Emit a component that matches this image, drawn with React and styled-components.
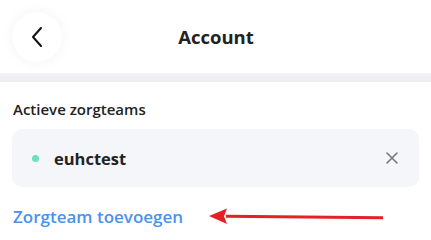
import styled, { createGlobalStyle } from "styled-components";

const GlobalStyle = createGlobalStyle`
  body {
    margin: 0;
    padding: 0;
    background: #ffffff;
    font-family: "Open Sans", Lato, sans-serif;
  }
`;

const Page = styled.div`
  width: 431px;
  height: 240px;
  overflow: hidden;
  background: #fff;
`;

const TopBar = styled.div`
  position: relative;
  height: 73px;
  display: flex;
  align-items: center;
  justify-content: center;
`;

const BackButton = styled.button`
  position: absolute;
  left: 12px;
  top: 12px;
  width: 50px;
  height: 50px;
  border-radius: 50%;
  border: none;
  background: #fff;
  box-shadow: 0 0 14px rgba(0, 0, 0, 0.05);
  display: flex;
  align-items: center;
  justify-content: center;
  padding: 0;
`;

const Title = styled.h1`
  margin: 0 0 0 1px;
  font-size: 18.5px;
  font-weight: 700;
  color: #222;
`;

const Divider = styled.div`
  height: 9px;
  background: linear-gradient(#f4f4f7, #ececf1);
`;

const Section = styled.div`
  padding: 17px 12px 0;
`;

const Label = styled.div`
  font-size: 15px;
  font-weight: 600;
  color: #222;
  padding-left: 1px;
  margin-bottom: 10px;
`;

const TeamCard = styled.div`
  height: 58px;
  border-radius: 10px;
  background: #f5f6fa;
  display: flex;
  align-items: center;
  padding: 0 21px 0 20px;
`;

const Dot = styled.span`
  width: 7px;
  height: 7px;
  border-radius: 50%;
  background: ${({ color }) => color};
  margin-right: 15px;
`;

const TeamName = styled.span`
  flex: 1;
  font-size: 16.5px;
  font-weight: 700;
  color: #222;
`;

const LinkRow = styled.div`
  position: relative;
  margin-top: 14px;
  height: 30px;
  display: flex;
  align-items: center;
`;

const AddLink = styled.a`
  font-size: 17px;
  font-weight: 600;
  color: #4a92ee;
  text-decoration: none;
  padding-left: 1px;
`;

const Arrow = styled.svg`
  position: absolute;
  left: 184px;
  top: 6px;
`;

export default function App() {
  return (
    <>
      <GlobalStyle />
      <Page>
        <TopBar>
          <BackButton>
            <svg width="16" height="24" viewBox="0 0 16 24">
              <path d="M12 3 L4 12 L12 21" fill="none" stroke="#111" strokeWidth="2" strokeLinecap="round" strokeLinejoin="round" />
            </svg>
          </BackButton>
          <Title>Account</Title>
        </TopBar>
        <Divider />
        <Section>
          <Label>Actieve zorgteams</Label>
          <TeamCard>
            <Dot color="#6fe0b9" />
            <TeamName>euhctest</TeamName>
            <svg width="12" height="12" viewBox="0 0 12 12">
              <path d="M1 1 L11 11 M11 1 L1 11" stroke="#777" strokeWidth="1.6" strokeLinecap="round" />
            </svg>
          </TeamCard>
          <LinkRow>
            <AddLink href="#">Zorgteam toevoegen</AddLink>
            <Arrow width="190" height="20" viewBox="0 0 190 20">
              <path d="M30 9.2 L187 10.8" stroke="#e32126" strokeWidth="3" />
              <path d="M13 9 L31 1.5 L28 9.2 L31 17 Z" fill="#e32126" />
            </Arrow>
          </LinkRow>
        </Section>
      </Page>
    </>
  );
}
